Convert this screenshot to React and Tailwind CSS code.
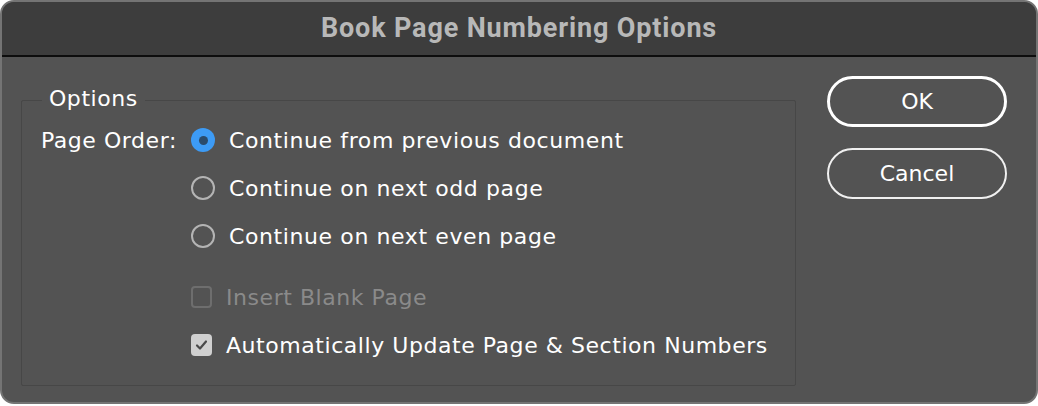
import React, { useState } from "react";

// Book Page Numbering Options dialog (dark InDesign-like theme)
const RadioRow = ({ label, checked, onClick }) => (
  <button onClick={onClick} className="flex items-center h-[48px] text-left">
    {checked ? (
      <span className="w-[24px] h-[24px] rounded-full bg-[#3d9bf5] flex items-center justify-center">
        <span className="w-[9px] h-[9px] rounded-full bg-[#2b4b6b]" />
      </span>
    ) : (
      <span className="w-[24px] h-[24px] rounded-full border-2 border-[#b4b4b4]" />
    )}
    <span className="ml-[14px] text-[22px] tracking-[0.6px] text-white">{label}</span>
  </button>
);

const CheckRow = ({ label, checked, disabled }) => (
  <div className="flex items-center h-[48px]">
    {checked ? (
      <span className="w-[21px] h-[22px] rounded-[4px] bg-[#d0d0d0] flex items-center justify-center">
        <svg width="13" height="12" viewBox="0 0 13 12">
          <path d="M2 6.5 L5 9.5 L11 2.5" fill="none" stroke="#4a4a4a" strokeWidth="2.2" strokeLinecap="round" strokeLinejoin="round" />
        </svg>
      </span>
    ) : (
      <span className="w-[21px] h-[22px] rounded-[4px] border-2 border-[#6e6e6e]" />
    )}
    <span className={`ml-[14px] text-[22px] tracking-[0.55px] ${disabled ? "text-[#8a8a8a]" : "text-white"}`}>{label}</span>
  </div>
);

export default function App() {
  const [order, setOrder] = useState(0);
  const options = [
    "Continue from previous document",
    "Continue on next odd page",
    "Continue on next even page",
  ];

  return (
    <div className="w-[1038px] h-[406px] bg-white" style={{ fontFamily: '"DejaVu Sans", sans-serif' }}>
      <div className="w-[1038px] h-[404px] rounded-[14px] border-2 border-[#747474] overflow-hidden flex flex-col bg-[#535353]">
        <div className="h-[55px] shrink-0 bg-[#3d3d3d] border-b-2 border-[#0d0d0d] flex items-center justify-center">
          <span className="text-[27px] font-bold text-[#b8b8b8] tracking-[0.85px]" style={{ fontFamily: 'Roboto, sans-serif' }}>
            Book Page Numbering Options
          </span>
        </div>

        <div className="flex flex-1 pl-[19px] pr-[29px] pt-[43px]">
          <div className="relative w-[777px] h-[286px] border border-[#474747] rounded-[2px]">
            <span className="absolute left-[20px] -top-[16px] px-[7px] bg-[#535353] text-[22px] tracking-[0.55px] leading-[28px] text-white">
              Options
            </span>
            <div className="flex pt-[15px]">
              <div className="w-[169px] pl-[19px] h-[48px] flex items-center text-[22px] tracking-[0.55px] text-white">Page Order:</div>
              <div className="flex flex-col">
                {options.map((o, i) => (
                  <RadioRow key={o} label={o} checked={order === i} onClick={() => setOrder(i)} />
                ))}
                <div className="h-[13px]" />
                <CheckRow label="Insert Blank Page" disabled />
                <CheckRow label="Automatically Update Page & Section Numbers" checked />
              </div>
            </div>
          </div>

          <div className="flex flex-col gap-[21px] ml-[31px] -mt-[24px]">
            <button className="w-[180px] h-[51px] rounded-full border-[3px] border-white text-[22px] text-white">OK</button>
            <button className="w-[180px] h-[51px] rounded-full border-2 border-[#f0f0f0] text-[22px] text-white">Cancel</button>
          </div>
        </div>
      </div>
    </div>
  );
}
